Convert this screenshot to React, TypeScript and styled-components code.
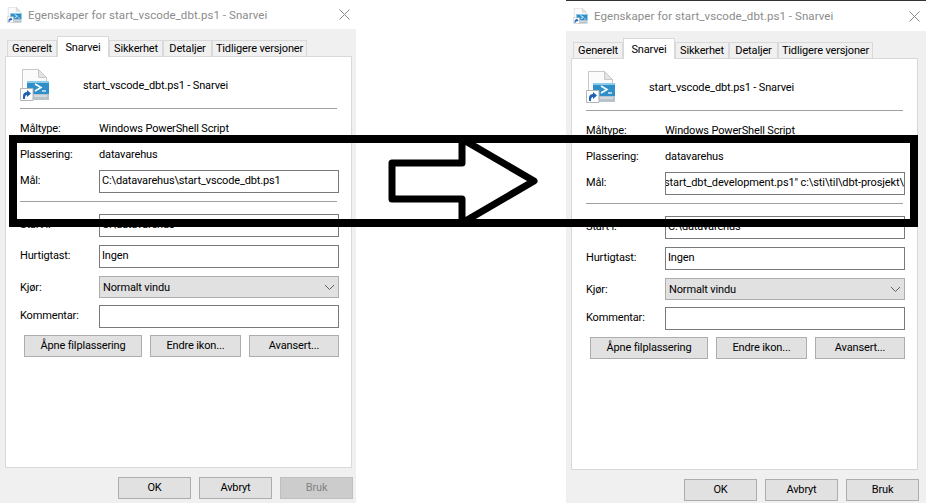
import React from "react";
import styled, { createGlobalStyle } from "styled-components";

const GlobalStyle = createGlobalStyle`
  html, body {
    margin: 0;
    padding: 0;
    background: #ffffff;
  }
  body {
    width: 926px;
    height: 503px;
    overflow: hidden;
    font-family: Roboto, "Liberation Sans", sans-serif;
    font-size: 11px;
    letter-spacing: -0.15px;
    color: #000000;
  }
`;

const ShortcutIcon = ({ size }: { size: number }) => (
  <svg width={size} height={size} viewBox="0 0 32 32">
    <path d="M2.500 .5h16l8 8v22h-24z" fill="#fbfbfb" stroke="#c8c8c8" />
    <path d="M18.500 .5v8h8z" fill="#e4e4e4" stroke="#c8c8c8" />
    <path d="M7 12h22v13H7z" fill="#2f8fc9" />
    <path d="M7 12h22v2H7z" fill="#8ccbea" />
    <path d="M15 15l6 3.500-6 3.500" fill="none" stroke="#ffffff" strokeWidth="1.600" />
    <path d="M22 22h4" stroke="#ffffff" strokeWidth="1.200" />
    <path d="M7 25h22v6H7z" fill="#b7c2ca" />
    <path d="M14 27h13" stroke="#eef2f4" strokeWidth="1" />
    <path d="M.5 19.500h12.500v12H.5z" fill="#ffffff" stroke="#b5b5b5" />
    <path d="M3 30v-3c0-3 2-4 4-4v-2l4 3.500-4 3.500v-2c-1.500 0-2 1-2 4z" fill="#1f5fb4" />
  </svg>
);

const Chevron = () => (
  <svg width="11" height="7" viewBox="0 0 11 7">
    <path d="M1 1l4.500 4.500L10 1" fill="none" stroke="#606060" strokeWidth="1" />
  </svg>
);

const CloseGlyph = () => (
  <svg width="11" height="11" viewBox="0 0 11 11">
    <path d="M.5.500l10 10M10.500.500l-10 10" stroke="#8a8a8a" strokeWidth="1" />
  </svg>
);

type DialogData = {
  target: string;
  alignEnd?: boolean;
  applyEnabled?: boolean;
};

const Dialog = ({ target, alignEnd, applyEnabled }: DialogData) => (
  <>
    <TitleBar>
      <ShortcutIcon size={16} />
      <TitleText>Egenskaper for start_vscode_dbt.ps1 - Snarvei</TitleText>
      <CloseGlyph />
    </TitleBar>
    <Frame>
      <TabStrip>
        <Tab $w={50}>Generelt</Tab>
        <Tab $w={52} $active>
          Snarvei
        </Tab>
        <Tab $w={54}>Sikkerhet</Tab>
        <Tab $w={49}>Detaljer</Tab>
        <Tab $w={95}>Tidligere versjoner</Tab>
      </TabStrip>
      <TabPage>
        <HeaderRow>
          <IconSlot>
            <ShortcutIcon size={32} />
          </IconSlot>
          <span>start_vscode_dbt.ps1 - Snarvei</span>
        </HeaderRow>
        <Divider $mt={7} />
        <InfoRow $mt={11}>
          <Label>Måltype:</Label>
          <span>Windows PowerShell Script</span>
        </InfoRow>
        <InfoRow $mt={10}>
          <Label>Plassering:</Label>
          <span>datavarehus</span>
        </InfoRow>
        <FieldRow $mt={8}>
          <FieldLabel>Mål:</FieldLabel>
          <Field $end={alignEnd}>{target}</Field>
        </FieldRow>
        <Divider $mt={8} />
        <FieldRow $mt={12}>
          <FieldLabel>Start i:</FieldLabel>
          <Field>C:\datavarehus</Field>
        </FieldRow>
        <FieldRow $mt={8}>
          <FieldLabel>Hurtigtast:</FieldLabel>
          <Field>Ingen</Field>
        </FieldRow>
        <FieldRow $mt={8} $h={22}>
          <Label>Kjør:</Label>
          <Select>
            <span>Normalt vindu</span>
            <Chevron />
          </Select>
        </FieldRow>
        <FieldRow $mt={7}>
          <FieldLabel>Kommentar:</FieldLabel>
          <Field />
        </FieldRow>
        <ActionRow>
          <Button $w={118}>Åpne filplassering</Button>
          <Button $w={91}>Endre ikon...</Button>
          <Button $w={90}>Avansert...</Button>
        </ActionRow>
      </TabPage>
      <Footer>
        <Button $w={73}>OK</Button>
        <Button $w={73}>Avbryt</Button>
        <Button $w={73} $disabled={!applyEnabled}>
          Bruk
        </Button>
      </Footer>
    </Frame>
  </>
);

export default function App() {
  return (
    <>
      <GlobalStyle />
      <Desktop>
        <LeftWindow>
          <Dialog target="C:\datavarehus\start_vscode_dbt.ps1" />
        </LeftWindow>
        <RightWindow>
          <Dialog
            alignEnd
            applyEnabled
            target={'start_dbt_development.ps1" c:\\sti\\til\\dbt-prosjekt\\'}
          />
        </RightWindow>
        <Annotation viewBox="0 0 926 503" width="926" height="503">
          <rect x="13" y="139" width="901" height="84" fill="none" stroke="#000" strokeWidth="8" />
          <path
            d="M462 139v24h-70v36h70v24l72-42z"
            fill="none"
            stroke="#000"
            strokeWidth="7"
            strokeLinejoin="round"
          />
        </Annotation>
      </Desktop>
    </>
  );
}

const Desktop = styled.div`
  position: relative;
  display: flex;
  justify-content: space-between;
  width: 926px;
  height: 503px;
  overflow: hidden;
`;

const LeftWindow = styled.div`
  width: 356px;
`;

const RightWindow = styled.div`
  width: 360px;
  margin-top: 1px;
  box-shadow: 0 -1px 0 #333333;
  --title-height: 30px;
`;

const TitleBar = styled.div`
  display: flex;
  align-items: center;
  height: var(--title-height, 29px);
  padding: 0 6px 0 7px;
  box-sizing: border-box;
  background: #ffffff;
`;

const TitleText = styled.span`
  flex: 1;
  margin-left: 5px;
  color: #8c8c8c;
  font-size: 11.5px;
  letter-spacing: 0.07px;
`;

const Frame = styled.div`
  height: 474px;
  padding: 8px 0 0 5px;
  box-sizing: border-box;
  background: #f0f0f0;
`;

const TabStrip = styled.div`
  display: flex;
  align-items: flex-end;
  height: 19px;
  padding-left: 2px;
`;

const Tab = styled.div<{ $w: number; $active?: boolean }>`
  display: flex;
  align-items: center;
  justify-content: center;
  flex: none;
  width: ${(p) => p.$w}px;
  height: ${(p) => (p.$active ? 21 : 16)}px;
  box-sizing: border-box;
  border: 1px solid #d9d9d9;
  border-bottom: none;
  background: ${(p) => (p.$active ? "#ffffff" : "#f0f0f0")};
  white-space: nowrap;
  position: relative;
  z-index: ${(p) => (p.$active ? 1 : 0)};
  margin-bottom: ${(p) => (p.$active ? -1 : 0)}px;
`;

const TabPage = styled.div`
  width: 347px;
  height: 412px;
  padding: 12px 12px 0 14px;
  box-sizing: border-box;
  border: 1px solid #d9d9d9;
  background: #ffffff;
`;

const HeaderRow = styled.div`
  display: flex;
  align-items: center;
  height: 32px;
`;

const IconSlot = styled.div`
  display: flex;
  width: 63px;
`;

const Divider = styled.div<{ $mt: number }>`
  height: 1px;
  width: 317px;
  margin-top: ${(p) => p.$mt}px;
  background: #a0a0a0;
`;

const InfoRow = styled.div<{ $mt: number }>`
  display: flex;
  align-items: center;
  height: 16px;
  margin-top: ${(p) => p.$mt}px;
`;

const FieldRow = styled.div<{ $mt: number; $h?: number }>`
  display: flex;
  align-items: center;
  height: ${(p) => p.$h ?? 23}px;
  margin-top: ${(p) => p.$mt}px;
`;

const Label = styled.span`
  width: 79px;
  flex: none;
`;

const FieldLabel = styled(Label)`
  padding-bottom: 3px;
`;

const Field = styled.div<{ $end?: boolean }>`
  display: flex;
  align-items: center;
  justify-content: ${(p) => (p.$end ? "flex-end" : "flex-start")};
  flex: none;
  width: 240px;
  height: 100%;
  padding: 0 ${(p) => (p.$end ? 0 : 2)}px 3px 2px;
  box-sizing: border-box;
  border: 1px solid #7a7a7a;
  background: #ffffff;
  letter-spacing: ${(p) => (p.$end ? -0.1 : -0.15)}px;
  white-space: nowrap;
  overflow: hidden;
`;

const Select = styled.div`
  display: flex;
  align-items: center;
  justify-content: space-between;
  flex: none;
  width: 240px;
  height: 100%;
  padding: 0 3px 0 3px;
  box-sizing: border-box;
  border: 1px solid #adadad;
  background: #e1e1e1;
`;

const ActionRow = styled.div`
  display: flex;
  gap: 8px;
  height: 22px;
  margin-top: 7px;
  padding-left: 4px;
`;

const Button = styled.div<{ $w: number; $disabled?: boolean }>`
  display: flex;
  align-items: center;
  justify-content: center;
  flex: none;
  width: ${(p) => p.$w}px;
  height: 22px;
  padding-bottom: 1px;
  box-sizing: border-box;
  border: 1px solid ${(p) => (p.$disabled ? "#bfbfbf" : "#adadad")};
  background: ${(p) => (p.$disabled ? "#cccccc" : "#e1e1e1")};
  color: ${(p) => (p.$disabled ? "#838383" : "#000000")};
`;

const Footer = styled.div`
  display: flex;
  justify-content: flex-end;
  gap: 8px;
  width: 348px;
  margin-top: 9px;
`;

const Annotation = styled.svg`
  position: absolute;
  left: 0;
  top: 0;
  pointer-events: none;
`;
